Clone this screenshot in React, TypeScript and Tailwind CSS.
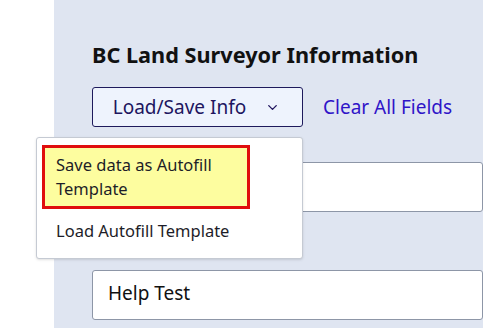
import { ChevronDown } from "lucide-react";

const font = { fontFamily: '"Noto Sans", "Open Sans", sans-serif' };

const LoadSaveMenu = () => (
  <div className="absolute left-[36px] top-[137px] w-[267px] h-[122px] rounded-[3px] border border-[#c5cad3] bg-white px-[5px] pt-[7px] shadow-sm">
    <div className="h-[64px] w-[208px] border-[3px] border-[#e00d0d] bg-[#fdfd9f] px-[11px] pt-[5px] text-[16.5px] leading-[24px] text-[#1d1d28]">
      Save data as Autofill Template
    </div>
    <div className="px-[14px] pt-[10px] text-[16.5px] leading-[24px] text-[#1d1d28]">
      Load Autofill Template
    </div>
  </div>
);

export default function App() {
  return (
    <div
      className="relative flex h-[328px] w-[483px] overflow-hidden bg-white"
      style={font}
    >
      <div className="w-[54px] shrink-0 bg-white" />
      <div className="flex-1 bg-[#dfe5f1] pl-[38px] pt-[41px]">
        <h2 className="text-[21.7px] font-bold leading-[28px] text-[#111]">
          BC Land Surveyor Information
        </h2>
        <div className="mt-[18px] flex items-center gap-[20px]">
          <button className="flex h-[40px] w-[211px] items-center justify-center gap-[19px] rounded-[3px] border border-[#1e1a5c] bg-[#eef3fd] pr-[2px] text-[19px] text-[#20155f]">
            Load/Save Info
            <ChevronDown className="h-[15px] w-[15px]" strokeWidth={2.2} />
          </button>
          <span className="text-[19px] text-[#2f14c8]">Clear All Fields</span>
        </div>
        <div className="mt-[35px] h-[50px] rounded-[3px] border border-[#8d96a7] bg-white" />
        <div className="mt-[22px] text-[16px] font-bold leading-[24px] text-[#111]">
          BC Land Surveyor Name
        </div>
        <div className="mt-[12px] flex h-[50px] items-center rounded-[3px] border border-[#8d96a7] bg-white px-[15px] pb-[3px] text-[19px] text-[#111]">
          Help Test
        </div>
      </div>
      <LoadSaveMenu />
    </div>
  );
}
